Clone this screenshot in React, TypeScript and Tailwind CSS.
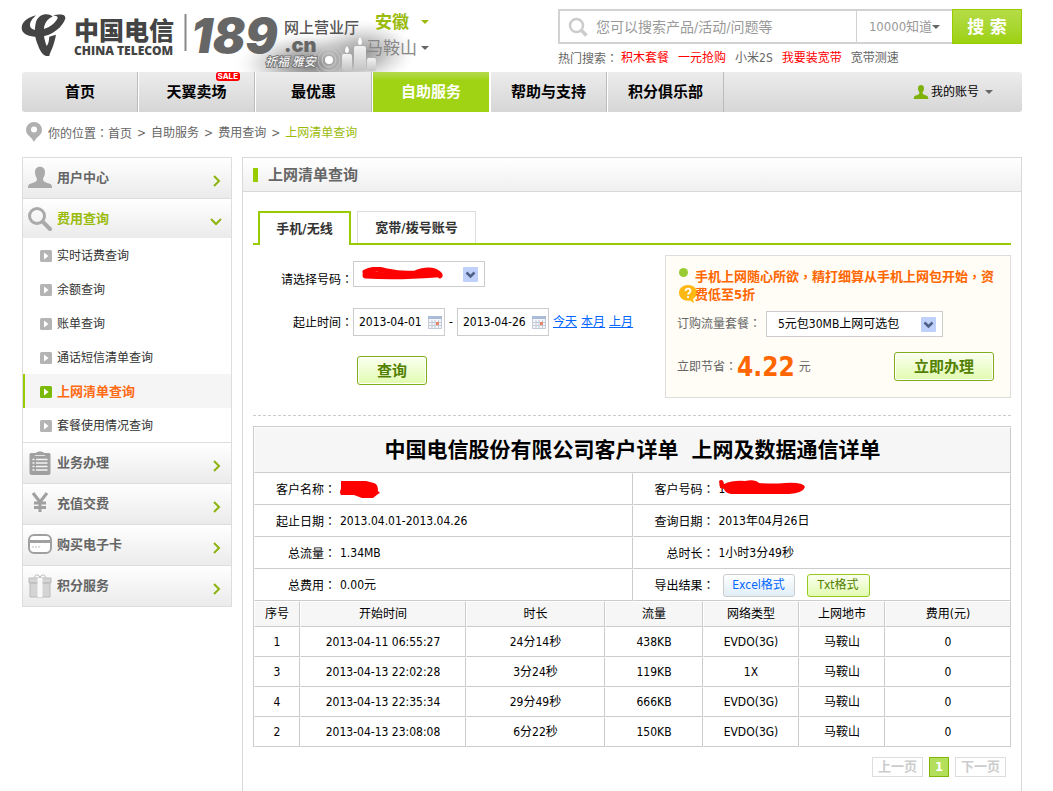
import type { ReactNode } from "react";

const navItems = ["首页", "天翼卖场", "最优惠", "自助服务", "帮助与支持", "积分俱乐部"];

const queryLinks = [
  "实时话费查询",
  "余额查询",
  "账单查询",
  "通话短信清单查询",
  "上网清单查询",
  "套餐使用情况查询",
];

const columns = [
  { title: "序号", width: 46 },
  { title: "开始时间", width: 166 },
  { title: "时长", width: 139 },
  { title: "流量", width: 98 },
  { title: "网络类型", width: 96 },
  { title: "上网地市", width: 86 },
  { title: "费用(元)", width: 126 },
];

const records = [
  ["1", "2013-04-11 06:55:27", "24分14秒", "438KB", "EVDO(3G)", "马鞍山", "0"],
  ["3", "2013-04-13 22:02:28", "3分24秒", "119KB", "1X", "马鞍山", "0"],
  ["4", "2013-04-13 22:35:34", "29分49秒", "666KB", "EVDO(3G)", "马鞍山", "0"],
  ["2", "2013-04-13 23:08:08", "6分22秒", "150KB", "EVDO(3G)", "马鞍山", "0"],
];

const cell = "border border-t-white border-l-white border-r-[#ccc] border-b-[#ccc]";

// Full-width colon that sits in the middle of its box
function Colon() {
  return <span className="font-['Noto_Sans_CJK_TC',sans-serif]">：</span>;
}

function Caret({ className }: { className: string }) {
  return (
    <svg viewBox="0 0 8 4" className={`h-1 w-2 ${className}`} fill="currentColor" aria-hidden="true">
      <path d="M0 0h8L4 4z" />
    </svg>
  );
}

function Logo() {
  return (
    <svg viewBox="0 0 340 72" className="h-[72px] w-[340px] shrink-0 overflow-visible" role="img" aria-label="中国电信 189">
      <defs>
        <radialGradient id="glow">
          <stop offset="0" stopColor="#777" />
          <stop offset="0.4" stopColor="#999" stopOpacity="0.7" />
          <stop offset="0.7" stopColor="#bbb" stopOpacity="0.35" />
          <stop offset="1" stopColor="#fff" stopOpacity="0" />
        </radialGradient>
        <linearGradient id="candle" x1="0" x2="0" y1="0" y2="1">
          <stop offset="0" stopColor="#f2f2f2" />
          <stop offset="1" stopColor="#c4c4c4" />
        </linearGradient>
        <clipPath id="banner">
          <rect x="200" y="10" width="200" height="62" />
        </clipPath>
      </defs>
      <g clipPath="url(#banner)">
        <ellipse cx="290" cy="64" rx="80" ry="34" fill="url(#glow)" />
        <ellipse cx="342" cy="52" rx="54" ry="34" fill="url(#glow)" opacity="0.75" />
        <circle cx="307" cy="60" r="15" fill="none" stroke="#ccc" opacity="0.6" />
        <circle cx="307" cy="60" r="11" fill="none" stroke="#ccc" opacity="0.7" />
        <circle cx="307" cy="60" r="7" fill="none" stroke="#ccc" />
        <circle cx="307" cy="60" r="4" fill="#fff" />
        <rect x="320" y="54" width="10" height="17" rx="2" fill="url(#candle)" />
        <rect x="332" y="46" width="12" height="25" rx="2" fill="url(#candle)" />
        <rect x="345" y="58" width="9" height="13" rx="2" fill="url(#candle)" />
        <path d="M325 46c3 4 2 7 0 7s-3-3 0-7zM338 37c3 5 2 8 0 8s-3-3 0-8z" fill="#fff" />
      </g>
      <g transform="translate(-4 8) scale(.333)" fill="#444">
        <path d="M54 22C28 28 6 46 12 66c4 14 26 22 54 20 38-3 68-30 76-54 2-12-10-16-38-10 16 2 18 6 12 14-12 18-32 28-54 30-16 1-26-4-26-14 0-12 8-20 18-30z" />
        <path d="M104 26C92 14 62 16 54 42c-6 24-4 46 6 70 6 16 12 28 24 32h10c2-12 14-28 20-64l-20 6c-1 14-3 22-8 28-6-16-10-32-8-52 1-16 10-30 26-36z" />
      </g>
      <text x="52" y="40" fontSize="25" fontWeight="900" fill="#444" fontFamily="'Noto Sans CJK SC', sans-serif">中国电信</text>
      <text x="52" y="55" fontSize="12" fontWeight="800" fill="#444" fontFamily="'Open Sans', sans-serif">CHINA TELECOM</text>
      <path d="M163.500 14v37" stroke="#888" strokeWidth="2" />
      <text x="169" y="53" fontSize="48" fontWeight="900" fontStyle="italic" fill="#666" fontFamily="Inter, sans-serif">189</text>
      <text x="262" y="33" fontSize="15" fontWeight="500" fill="#555" fontFamily="'Noto Sans CJK SC', sans-serif">网上营业厅</text>
      <text x="262" y="52" fontSize="20" fontWeight="900" fill="#666" fontFamily="Inter, sans-serif">.cn</text>
      <text x="243" y="66" fontSize="12" fontStyle="italic" fill="#fff" stroke="#777" strokeWidth="2" paintOrder="stroke" fontFamily="'Noto Sans CJK SC', sans-serif">祈福 雅安</text>
    </svg>
  );
}

function Header() {
  return (
    <header className="flex h-[72px] items-start">
      <Logo />
      <div className="relative flex flex-col items-start pt-3 pl-1">
        <button className="ml-[9px] flex h-5 items-center text-[17px] font-bold text-[#9abb0b]">
          安徽 <Caret className="ml-3 text-[#9abb0b]" />
        </button>
        <button className="mt-1 flex h-6 items-center text-[17px] text-[#888]">
          马鞍山 <Caret className="ml-1 text-[#666]" />
        </button>
      </div>
      <div className="ml-auto w-[464px] pt-[9px]">
        <form className="flex h-[35px]">
          <label className="flex min-w-0 flex-1 items-center border-2 border-r-0 border-[#d2d2d2] pl-2">
            <svg viewBox="0 0 20 20" className="size-5 shrink-0" fill="none" stroke="#ccc" aria-hidden="true">
              <circle cx="8.500" cy="8.500" r="6.500" strokeWidth="2.500" />
              <path d="M13.500 13.500l5 5" strokeWidth="3.500" />
            </svg>
            <input
              aria-label="搜索"
              placeholder="您可以搜索产品/活动/问题等"
              className="ml-2 min-w-0 flex-1 text-[14px] outline-none placeholder:text-[#999]"
            />
          </label>
          <button type="button" className="flex w-24 items-center justify-center border-y-2 border-l border-[#d2d2d2] text-[13px] text-[#999]">
            10000知道 <Caret className="text-[#666]" />
          </button>
          <button className="w-[70px] border border-[#9c0] bg-linear-to-b from-[#b5dc45] to-[#9dd10c] text-[17px] font-bold text-white">
            搜 索
          </button>
        </form>
        <p className="mt-1 flex h-5 items-center gap-[9px] text-[12px] text-[#666]">
          <span className="-mr-[6px]">热门搜索<Colon /></span>
          <a href="#" className="text-[#f00]">积木套餐</a>
          <a href="#" className="text-[#f00]">一元抢购</a>
          <a href="#">小米2S</a>
          <a href="#" className="text-[#f00]">我要装宽带</a>
          <a href="#">宽带测速</a>
        </p>
      </div>
    </header>
  );
}

function Nav() {
  return (
    <nav className="flex h-10 rounded-[3px] bg-linear-to-b from-[#ececec] to-[#d6d6d6]">
      {navItems.map((item) => (
        <a
          key={item}
          href="#"
          className={
            item === "自助服务"
              ? "relative flex w-[118px] items-center justify-center border-x border-white bg-linear-to-b from-[#b4da4a] to-[#a0d314] to-20% text-[15px] font-bold text-white"
              : "relative flex w-[117px] items-center justify-center border-r border-l border-l-white border-r-[#bbb] text-[15px] font-bold text-black first:w-[116px] first:border-l-transparent"
          }
        >
          {item}
          {item === "天翼卖场" && (
            <span className="absolute top-0 right-[14px] h-[9px] rounded-[3px] bg-[#f00] px-[2px] font-['Inter',sans-serif] text-[8px] leading-[9px] text-white">
              SALE
            </span>
          )}
        </a>
      ))}
      <button className="mr-[29px] ml-auto flex items-center text-[12px] text-black">
        <svg viewBox="0 0 16 14" className="mr-[2px] h-[14px] w-4" fill="#7fb10b" aria-hidden="true">
          <path d="M5 3c0-4 6-4 6 0 0 3-1 3-1.500 5l1 1.500 4 1.500 1 3H.500l1-3 4-1.500 1-1.500C6 6 5 6 5 3z" />
        </svg>
        我的账号 <Caret className="ml-[6px] text-[#666]" />
      </button>
    </nav>
  );
}

function Breadcrumb() {
  return (
    <div className="flex h-[45px] items-start pt-[9px] text-[12px] text-[#666]">
      <svg viewBox="0 0 16 20" className="mt-px ml-1 h-5 w-4" aria-hidden="true">
        <path d="M8 0a8 8 0 0 1 8 8c0 5-5 6-8 12C5 14 0 13 0 8a8 8 0 0 1 8-8z" fill="#b0b0b0" />
        <circle cx="8" cy="7.500" r="3" fill="#fff" />
      </svg>
      <p className="ml-[6px] flex h-6 items-center gap-[5px]">
        <span>你的位置<Colon /><a href="#">首页</a></span>
        <span>&gt;</span>
        <a href="#">自助服务</a>
        <span>&gt;</span>
        <a href="#">费用查询</a>
        <span>&gt;</span>
        <a href="#" className="text-[#9abb0b]">上网清单查询</a>
      </p>
    </div>
  );
}

function SideGroup({ title, open, icon }: { title: string; open?: boolean; icon: ReactNode }) {
  return (
    <a
      href="#"
      className={`flex items-center border-t border-[#ddd] bg-linear-to-b from-white to-[#ebebeb] pr-2 pl-[5px] text-[13px] font-bold ${open ? "h-10 text-[#9abb0b]" : "h-[41px] text-[#666]"}`}
    >
      <svg viewBox="0 0 24 24" className="mr-[5px] size-6" fill="#aaa" aria-hidden="true">
        {icon}
      </svg>
      {title}
      <svg viewBox="0 0 14 14" className="mt-[5px] ml-auto size-[14px]" fill="none" stroke="#8cb30e" strokeWidth="2" aria-hidden="true">
        <path d={open ? "M2 5l5 5 5-5" : "M5 2l5 5-5 5"} />
      </svg>
    </a>
  );
}

function Sidebar() {
  return (
    <aside className="w-[210px] shrink-0 self-start border-x border-b border-[#ddd]">
      <SideGroup
        title="用户中心"
        icon={<path d="M7 6c0-7 10-7 10 0 0 4-1.500 5-2 7 0 2 1 2.500 3 3.500l4.500 1.500c1 .500 1.500 2 1.500 4H0c0-2 .500-3.500 1.500-4L6 16.500c2-1 3-1.500 3-3.500-.500-2-2-3-2-7z" />}
      />
      <SideGroup
        open
        title="费用查询"
        icon={
          <g fill="none" stroke="#aaa">
            <circle cx="9" cy="9" r="7.500" strokeWidth="3" />
            <path d="M15 15l7 7" strokeWidth="4" strokeLinecap="round" />
          </g>
        }
      />
      <ul>
        {queryLinks.map((link) => {
          const active = link === "上网清单查询";
          return (
            <li key={link}>
              <a
                href="#"
                className={`flex h-[34px] items-center border-l-2 pt-[2px] pl-[15px] ${active ? "border-[#9c0] bg-[#f5f5f5] text-[13px] font-bold text-[#ff6a13]" : "border-transparent text-[12px] text-[#333]"}`}
              >
                <svg viewBox="0 0 12 12" className="mr-[5px] size-3" aria-hidden="true">
                  <rect width="12" height="12" rx="1.500" fill={active ? "#7cba0a" : "#b4b4b4"} />
                  <path d="M4 2.500L8.500 6 4 9.500z" fill="#fff" />
                </svg>
                {link}
              </a>
            </li>
          );
        })}
      </ul>
      <SideGroup
        title="业务办理"
        icon={
          <>
            <path d="M3 2h5c1-2 7-2 8 0h5q1.500 0 1.500 1.500v18Q22.500 24 20 24H4q-2.500 0-2.500-2.500v-18Q1.500 2 3 2z" fill="#a0a0a0" />
            <path d="M7 4.500h10" stroke="#e4e4e4" />
            <path d="M4.500 8.500h2M8 8.500h11.500M4.500 12h2M8 12h11.500M4.500 15.500h2M8 15.500h11.500M4.500 19h2M8 19h11.500" stroke="#f4f4f4" strokeWidth="1.500" />
          </>
        }
      />
      <SideGroup
        title="充值交费"
        icon={<path d="M5 1l7 9 7-9M6 11h12M6 15.500h12M12 10v10" fill="none" stroke="#a0a0a0" strokeWidth="3" />}
      />
      <SideGroup
        title="购买电子卡"
        icon={
          <>
            <rect x="1" y="2" width="22" height="18" rx="5" fill="#fff" stroke="#a0a0a0" strokeWidth="2" />
            <path d="M1 8.500h22" stroke="#a0a0a0" strokeWidth="3" />
            <path d="M4 14h8" stroke="#bbb" strokeDasharray="2 1" />
          </>
        }
      />
      <SideGroup
        title="积分服务"
        icon={
          <>
            <path d="M1 4h22v5H1zM2 9h20v14H2z" fill="#d4d4d4" stroke="#bbb" />
            <path d="M9.500 4h5v19h-5z" fill="#f8f8f8" />
            <path d="M12 3.500C11 0 6 0 7 3.500M12 3.500c1-3.500 6-3.500 5 0" fill="none" stroke="#bbb" />
          </>
        }
      />
    </aside>
  );
}

function Dropdown({ id, className, children }: { id: string; className: string; children: ReactNode }) {
  return (
    <div className={`relative ${className}`}>
      <select id={id} className="h-[26px] w-full appearance-none border border-[#ccc] bg-white pl-[11px] text-[12px] text-black">
        {children}
      </select>
      <svg viewBox="0 0 15 15" className="pointer-events-none absolute top-[6px] right-[7px] size-[15px]" aria-hidden="true">
        <rect width="15" height="15" rx="1" fill="#bfd1fa" />
        <path d="M3.500 5.500l4 4 4-4" fill="none" stroke="#4d6185" strokeWidth="2.500" />
      </svg>
    </div>
  );
}

function DateField({ label, value }: { label: string; value: string }) {
  return (
    <label className="flex h-7 w-[92px] items-center border border-[#ccc] pr-[2px] pl-[5px]">
      <input aria-label={label} defaultValue={value} className="w-0 min-w-0 flex-1 text-[12px] outline-none" />
      <svg viewBox="0 0 14 13" className="h-[13px] w-[14px]" aria-hidden="true">
        <path d="M.500.500h13v12H.500z" fill="#f4f6fa" stroke="#c3cbd8" />
        <path d="M0 0h14v3H0z" fill="#aabbd6" />
        <path d="M1 6.500h12M1 9.500h12M4 4v9M7 4v9M10.500 4v9" stroke="#c3cbd8" />
        <path d="M8 6h3v3H8z" fill="#e8836b" />
      </svg>
    </label>
  );
}

const greenButton =
  "h-[29px] rounded-[3px] border border-[#7fae1b] bg-linear-to-b from-[#fbfff0] to-[#e2fbb0] text-[15px] font-bold text-[#528000] ring-1 ring-white ring-inset";

function QueryForm() {
  return (
    <form className="flex-1 pt-[6px] text-[12px]">
      <div className="flex">
        <label htmlFor="number" className="flex h-9 w-[100px] items-center justify-end">
          <span>请选择号码<Colon /></span>
        </label>
        <div className="relative">
          <Dropdown id="number" className="w-[132px]">
            <option></option>
          </Dropdown>
          <svg viewBox="0 0 84 14" className="pointer-events-none absolute top-[6px] left-2 h-[14px] w-[84px]" aria-hidden="true">
            <path d="M4 5Q14 0 26 4q14 3 28 2 12-5 20-2 6 3 5 5" fill="none" stroke="#f00" strokeWidth="5" strokeLinecap="round" />
            <path d="M5 8q30 2 70-1" stroke="#f00" strokeWidth="7" strokeLinecap="round" fill="none" />
          </svg>
        </div>
      </div>
      <div className="mt-[11px] flex items-center">
        <span className="w-[100px] text-right">起止时间<Colon /></span>
        <DateField label="开始日期" value="2013-04-01" />
        <span className="w-3 text-center">-</span>
        <DateField label="结束日期" value="2013-04-26" />
        <div className="ml-1 flex gap-1 text-[#06f] underline">
          <a href="#">今天</a>
          <a href="#">本月</a>
          <a href="#">上月</a>
        </div>
      </div>
      <button type="button" className={`mt-5 ml-[104px] w-[70px] ${greenButton}`}>查询</button>
    </form>
  );
}

function Promo() {
  return (
    <section className="relative h-[143px] w-[346px] border border-[#ddd] bg-[#fffdf6] pt-3 pr-4 pl-[11px] text-[12px] text-[#666]">
      <span className="absolute top-3 left-[13px] size-[9px] rounded-full bg-[#9c3]" />
      <svg viewBox="0 0 18 18" className="absolute top-[29px] left-[13px] size-[18px]" aria-hidden="true">
        <path d="M9 0c5 0 9 3 9 7.500 0 3-2 5-4 6.500l1 4-4-2.500C5 16.500 0 13 0 8c0-5 4-8 9-8z" fill="#fdb813" />
        <path d="M6.500 6c0-3.500 5.500-3 5 0 0 1.500-2.500 2-2.500 3.500M9 11v2" fill="none" stroke="#fff" strokeWidth="1.800" />
      </svg>
      <p className="relative -mr-3 pl-[18px] font-['DejaVu_Sans_Condensed','Noto_Sans_CJK_TC',sans-serif] text-[13px] leading-[18px] font-bold text-[#f60]">
        手机上网随心所欲，精打细算从手机上网包开始，资费低至5折
      </p>
      <div className="mt-[7px] flex">
        <label htmlFor="plan" className="h-6 w-[89px] leading-6">订购流量套餐<Colon /></label>
        <Dropdown id="plan" className="w-[177px]">
          <option>5元包30MB上网可选包</option>
        </Dropdown>
      </div>
      <div className="mt-[15px] flex items-center">
        <span>立即节省<Colon /></span>
        <strong className="text-[26px] leading-7 text-[#f60]">4.22</strong>
        <span className="ml-1">元</span>
        <button className={`ml-auto w-[100px] ${greenButton}`}>立即办理</button>
      </div>
    </section>
  );
}

function InfoRow({ left, leftValue, right, rightValue }: { left: string; leftValue: ReactNode; right: string; rightValue: ReactNode }) {
  return (
    <tr className="h-8">
      {[[left, leftValue], [right, rightValue]].map(([name, value]) => (
        <td key={String(name)} className={`w-1/2 p-0 ${cell}`}>
          <div className="flex items-center">
            <span className="w-[81px] text-right">{name}<Colon /></span>
            <span className="ml-1">{value}</span>
          </div>
        </td>
      ))}
    </tr>
  );
}

function Details() {
  return (
    <div className="mt-[10px] border-t border-l border-[#ccc] text-[12px] text-black">
      <table className="w-full table-fixed border-separate border-spacing-0">
        <thead>
          <tr className="h-[46px]">
            <th colSpan={2} className={`bg-[#f6f6f6] p-0 text-[21px] font-bold ${cell}`}>
              中国电信股份有限公司客户详单&nbsp; 上网及数据通信详单
            </th>
          </tr>
        </thead>
        <tbody>
          <InfoRow
            left="客户名称"
            leftValue={
              <svg viewBox="0 0 41 19" className="h-[19px] w-[41px]" aria-hidden="true">
                <path d="M1 1h25l8 2q4 1 4 8l2 2-2 1-5 4H22l-8-3H1q-2-3 0-6z" fill="#f00" />
              </svg>
            }
            right="客户号码"
            rightValue={
              <span className="relative block">
                1
                <svg viewBox="0 0 86 15" className="absolute top-0 left-0 h-[15px] w-[86px]" aria-hidden="true">
                  <path d="M0 1q4-3 5 3Q14 0 26 1q10-2 14 2 14 1 26 0 18-1 20 4-2 6-16 7H12Q6 13 5 9L1 8z" fill="#f00" />
                </svg>
              </span>
            }
          />
          <InfoRow left="起止日期" leftValue="2013.04.01-2013.04.26" right="查询日期" rightValue="2013年04月26日" />
          <InfoRow left="总流量" leftValue="1.34MB" right="总时长" rightValue="1小时3分49秒" />
          <InfoRow
            left="总费用"
            leftValue="0.00元"
            right="导出结果"
            rightValue={
              <span className="ml-1 flex gap-3">
                <button className="h-[23px] w-[72px] rounded-[3px] border border-[#ccc] bg-linear-to-b from-white to-[#e0edf6] text-[#06f]">Excel格式</button>
                <button className="h-[23px] w-[63px] rounded-[3px] border border-[#98c91e] bg-linear-to-b from-[#fbfff0] to-[#e2fbb0] text-[#528000]">Txt格式</button>
              </span>
            }
          />
        </tbody>
      </table>
      <table className="w-full table-fixed border-separate border-spacing-0 text-center">
        <thead>
          <tr className="h-[26px]">
            {columns.map((column) => (
              <th key={column.title} style={{ width: `${(column.width / 757) * 100}%` }} className={`bg-[#f6f6f6] p-0 font-normal ${cell}`}>
                {column.title}
              </th>
            ))}
          </tr>
        </thead>
        <tbody>
          {records.map((record) => (
            <tr key={record[0]} className="h-[30px]">
              {record.map((value, i) => (
                <td key={i} className={`p-0 ${cell}`}>{value}</td>
              ))}
            </tr>
          ))}
        </tbody>
      </table>
    </div>
  );
}

export default function App() {
  return (
    <div className="mr-[31px] ml-[22px] bg-white font-['DejaVu_Sans_Condensed','Noto_Sans','Noto_Sans_CJK_SC',sans-serif] leading-[18px]">
      <Header />
      <Nav />
      <Breadcrumb />
      <div className="flex gap-[10px]">
        <Sidebar />
        <main className="min-w-0 flex-1 border-x border-t border-[#d9d9d9] pb-[14px]">
          <div className="flex h-[34px] items-center border-b border-[#d9d9d9] bg-linear-to-b from-white to-[#f0f0f0] pl-[10px]">
            <span className="mr-[10px] h-[14px] w-[5px] bg-[#9c0]" />
            <h1 className="text-[15px] font-bold text-[#666]">上网清单查询</h1>
          </div>
          <div className="px-[10px]">
            {/* Tabs */}
            <div className="mt-[19px] flex h-[34px] items-stretch text-[13px] font-bold text-[#333]">
              <span className="w-[5px] border-b-2 border-[#9c0]" />
              <button className="w-[93px] border-2 border-b-0 border-[#9c0]">手机/无线</button>
              <span className="w-[6px] border-b-2 border-[#9c0]" />
              <div className="flex flex-1 border-b-2 border-[#9c0]">
                <button className="w-[119px] border border-b-0 border-[#ddd]">宽带/拨号账号</button>
              </div>
            </div>
            <div className="mt-[10px] flex text-black">
              <QueryForm />
              <Promo />
            </div>
            <div className="mt-[17px] border-t border-dashed border-[#ccc]" />
            <Details />
            {/* Pagination */}
            <div className="mt-[10px] mr-[5px] flex justify-end gap-[6px] text-[13px] font-bold">
              <button disabled className="h-5 w-[51px] border border-[#ddd] text-[#ccc]">上一页</button>
              <button className="h-5 w-5 border border-[#82b70a] bg-[#b4df5b] text-white">1</button>
              <button disabled className="h-5 w-[51px] border border-[#ddd] text-[#ccc]">下一页</button>
            </div>
          </div>
        </main>
      </div>
    </div>
  );
}
